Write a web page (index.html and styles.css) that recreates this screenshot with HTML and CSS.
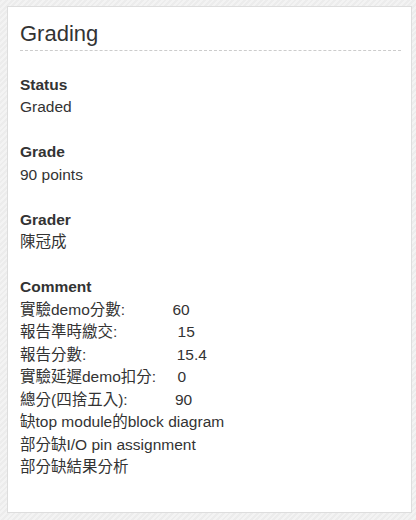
FILE: index.html
```html
<!DOCTYPE html>
<html lang="zh-Hant">
<head>
<meta charset="utf-8">
<title>Grading</title>
<link rel="stylesheet" href="styles.css">
</head>
<body>
<div class="card">
  <h2 class="card-title">Grading</h2>
  <div class="field">
    <div class="field-label">Status</div>
    <div class="field-value">Graded</div>
  </div>
  <div class="field">
    <div class="field-label">Grade</div>
    <div class="field-value">90 points</div>
  </div>
  <div class="field">
    <div class="field-label">Grader</div>
    <div class="field-value">陳冠成</div>
  </div>
  <div class="field">
    <div class="field-label">Comment</div>
    <div class="field-value comment">實驗demo分數:           60
報告準時繳交:              15
報告分數:                     15.4
實驗延遲demo扣分:     0
總分(四捨五入):           90
缺top module的block diagram
部分缺I/O pin assignment
部分缺結果分析</div>
  </div>
</div>
</body>
</html>
```
FILE: styles.css
```css
html, body {
  margin: 0;
  padding: 0;
}
body {
  width: 416px;
  height: 520px;
  overflow: hidden;
  background-color: #eeeeee;
  background-image: repeating-linear-gradient(135deg, #ececec 0, #ececec 2px, #f3f3f3 2px, #f3f3f3 4px);
  font-family: "Liberation Sans", Arial, "Noto Sans CJK TC", sans-serif;
  color: #333333;
  font-size: 15.5px;
  line-height: 22.5px;
}
.card {
  box-sizing: border-box;
  margin: 6px 4px 0 7px;
  height: 507px;
  background: #ffffff;
  border: 1px solid #dddddd;
  padding: 0 10px 0 12px;
}
.card-title {
  margin: 0;
  padding-top: 15px;
  padding-bottom: 4px;
  font-size: 22px;
  font-weight: normal;
  line-height: 24px;
  border-bottom: 1px dashed #cccccc;
}
.field {
  margin-top: 22.5px;
}
.field-label {
  font-weight: bold;
}
.comment {
  white-space: pre-wrap;
}
```
